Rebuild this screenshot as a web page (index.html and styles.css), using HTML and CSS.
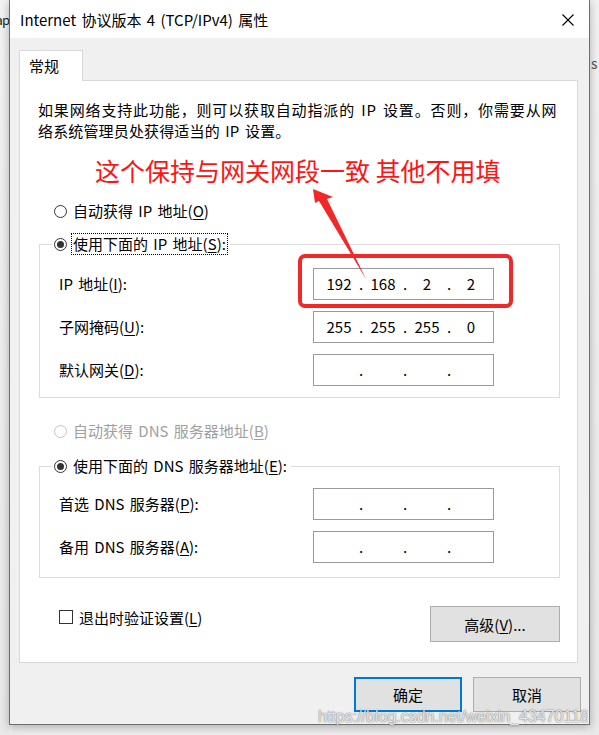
FILE: index.html
```html
<!DOCTYPE html>
<html lang="zh-CN">
<head>
<meta charset="utf-8">
<title>Internet 协议版本 4 (TCP/IPv4) 属性</title>
<link rel="stylesheet" href="styles.css">
</head>
<body>
<div class="desk">
  <div class="side side-left"><span class="side-text">ap</span></div>
  <div class="window">
    <div class="titlebar">
      <span class="title">Internet 协议版本 4 (TCP/IPv4) 属性</span>
      <svg class="close" width="12" height="12" viewBox="0 0 12 12"><path d="M0.5 0.5L11.5 11.5M11.5 0.5L0.5 11.5" stroke="#000" stroke-width="1.1" fill="none"/></svg>
    </div>
    <div class="body">
      <div class="tabs"><div class="tab">常规</div></div>
      <div class="panel">
        <p class="desc"><span class="line1">如果网络支持此功能，则可以获取自动指派的 IP 设置。否则，你需要从网</span><span class="line2">络系统管理员处获得适当的 IP 设置。</span></p>
        <div class="note">这个保持与网关网段一致 其他不用填</div>

        <div class="radio-row first"><span class="radio"></span><span class="rtext">自动获得 IP 地址(<u>O</u>)</span></div>
        <fieldset class="group g1">
          <legend class="legend"><span class="radio checked"></span><span class="focus">使用下面的 IP 地址(<u>S</u>):</span></legend>
          <div class="field-row"><span class="label">IP 地址(<u>I</u>):</span>
            <div class="ip"><span class="seg">192</span><span class="dot">.</span><span class="seg">168</span><span class="dot">.</span><span class="seg">2</span><span class="dot">.</span><span class="seg">2</span></div>
          </div>
          <div class="field-row"><span class="label">子网掩码(<u>U</u>):</span>
            <div class="ip"><span class="seg">255</span><span class="dot">.</span><span class="seg">255</span><span class="dot">.</span><span class="seg">255</span><span class="dot">.</span><span class="seg">0</span></div>
          </div>
          <div class="field-row"><span class="label">默认网关(<u>D</u>):</span>
            <div class="ip"><span class="seg"></span><span class="dot">.</span><span class="seg"></span><span class="dot">.</span><span class="seg"></span><span class="dot">.</span><span class="seg"></span></div>
          </div>
        </fieldset>

        <div class="radio-row third disabled"><span class="radio"></span><span class="rtext">自动获得 DNS 服务器地址(<u>B</u>)</span></div>
        <fieldset class="group g2">
          <legend class="legend"><span class="radio checked"></span><span class="nofocus">使用下面的 DNS 服务器地址(<u>E</u>):</span></legend>
          <div class="field-row"><span class="label">首选 DNS 服务器(<u>P</u>):</span>
            <div class="ip"><span class="seg"></span><span class="dot">.</span><span class="seg"></span><span class="dot">.</span><span class="seg"></span><span class="dot">.</span><span class="seg"></span></div>
          </div>
          <div class="field-row"><span class="label">备用 DNS 服务器(<u>A</u>):</span>
            <div class="ip"><span class="seg"></span><span class="dot">.</span><span class="seg"></span><span class="dot">.</span><span class="seg"></span><span class="dot">.</span><span class="seg"></span></div>
          </div>
        </fieldset>

        <div class="option-row">
          <div class="check-row"><span class="checkbox"></span><span>退出时验证设置(<u>L</u>)</span></div>
          <div class="btn adv">高级(<u>V</u>)...</div>
        </div>
      </div>
      <div class="actions">
        <div class="btn primary">确定</div>
        <div class="btn">取消</div>
      </div>
    </div>
  </div>
  <div class="side side-right"><span class="side-s">s</span></div>
</div>

<svg class="overlay" width="599" height="735" viewBox="0 0 599 735">
  <rect x="300" y="256" width="211" height="50" rx="5" ry="5" fill="none" stroke="#f02828" stroke-width="4"/>
  <polygon points="313,189 333,197 327,199 366,279 319,201 315,203" fill="#f02828"/>
</svg>
<div class="watermark">https://blog.csdn.net/weixin_43470118</div>
</body>
</html>
```

FILE: styles.css
```css
html, body {
  margin: 0;
  padding: 0;
}
body {
  width: 599px;
  height: 735px;
  overflow: hidden;
  background: #ededed;
  font-family: "Noto Sans CJK SC", "Noto Sans", sans-serif;
  font-size: 15px;
  word-spacing: 2px;
  color: #000;
}
u {
  text-decoration: underline;
  text-underline-offset: 2px;
}
.desk {
  display: flex;
  height: 735px;
  align-items: flex-start;
}
.side {
  height: 735px;
  overflow: hidden;
  background: linear-gradient(#f2f2f2, #e9e9e9);
}
.side-left {
  width: 9px;
  display: flex;
  justify-content: flex-end;
}
.side-text {
  display: block;
  margin-top: 9px;
  font-size: 13px;
  letter-spacing: -1px;
  line-height: 22px;
  white-space: nowrap;
  color: #1a1a1a;
}
.side-right {
  flex: 1;
}
.side-s {
  display: block;
  margin: 53px 0 0 1px;
  font-size: 14px;
  line-height: 20px;
  color: #555;
}
.window {
  width: 581px;
  box-sizing: border-box;
  border: 1px solid #6e6e6e;
  border-top: none;
  display: flex;
  flex-direction: column;
  box-shadow: 0 2px 9px rgba(0, 0, 0, 0.28);
  position: relative;
  z-index: 1;
}
.titlebar {
  height: 38px;
  background: #fff;
  display: flex;
  align-items: center;
  justify-content: space-between;
  padding: 0 15px 0 10px;
}
.title {
  font-size: 15px;
  line-height: 20px;
  margin-top: 2px;
}
.close {
  display: block;
  margin-top: 2px;
}
.body {
  background: #f0f0f0;
  padding: 12px 8px 12px 9px;
  display: flex;
  flex-direction: column;
}
.tabs {
  display: flex;
}
.tab {
  width: 64px;
  height: 31px;
  box-sizing: border-box;
  border: 1px solid #d9d9d9;
  border-bottom: none;
  background: #fff;
  margin-bottom: -1px;
  position: relative;
  z-index: 1;
  padding-left: 9px;
  line-height: 30px;
  font-size: 15px;
}
.panel {
  background: #fff;
  border: 1px solid #d9d9d9;
  margin-right: 3px;
  padding: 18px 18px 20px 18px;
}
.desc {
  margin: 0;
  font-size: 15px;
  line-height: 21px;
  white-space: nowrap;
}
.line1,
.line2 {
  display: block;
}
.line1 {
  letter-spacing: 0.85px;
}
.line2 {
  letter-spacing: 0.15px;
}
.note {
  margin: 13px 0 0 57px;
  font-size: 25px;
  line-height: 32px;
  word-spacing: 0;
  color: #ff1414;
  white-space: nowrap;
}
.radio-row {
  display: flex;
  align-items: center;
  height: 22px;
  margin-left: 16px;
}
.radio-row.first {
  margin-top: 14px;
}
.radio-row.third {
  margin-top: 22px;
}
.radio {
  width: 13px;
  height: 13px;
  box-sizing: border-box;
  border: 1px solid #333;
  border-radius: 50%;
  background: #fff;
  display: flex;
  align-items: center;
  justify-content: center;
  flex: none;
}
.radio.checked::after {
  content: "";
  width: 7px;
  height: 7px;
  border-radius: 50%;
  background: #333;
}
.radio-row .radio {
  margin-right: 6px;
}
.rtext {
  line-height: 20px;
}
.disabled {
  color: #a0a0a0;
}
.disabled .radio {
  border-color: #c4c4c4;
}
.group {
  margin: 0 0 0 1px;
  width: 521px;
  box-sizing: border-box;
  border: 1px solid #dcdcdc;
  min-width: 0;
}
.g1 {
  margin-top: 11px;
  padding: 13px 0 11px 19px;
}
.g2 {
  margin-top: 13px;
  padding: 11px 0 14px 19px;
}
.legend {
  padding: 0 2px;
  margin-left: -7px;
  display: flex;
  align-items: center;
  height: 22px;
}
.legend .radio {
  margin-right: 4px;
}
.focus {
  border: 1px dotted #000;
  padding: 0 1px;
  line-height: 20px;
}
.nofocus {
  padding: 0 2px;
  line-height: 20px;
}
.field-row {
  display: flex;
  align-items: center;
  height: 32px;
}
.field-row + .field-row {
  margin-top: 11px;
}
.label {
  width: 254px;
  flex: none;
  line-height: 20px;
}
.ip {
  width: 181px;
  height: 32px;
  box-sizing: border-box;
  border: 1px solid #9a9a9a;
  background: #fff;
  display: flex;
  align-items: center;
  padding-left: 7px;
  font-size: 15px;
  word-spacing: 0;
}
.seg {
  width: 36px;
  text-align: center;
  line-height: 20px;
}
.dot {
  width: 8px;
  text-align: center;
  line-height: 20px;
}
.option-row {
  margin-top: 28px;
  display: flex;
  justify-content: space-between;
  align-items: flex-start;
}
.check-row {
  display: flex;
  align-items: center;
  height: 22px;
  margin-left: 21px;
}
.checkbox {
  width: 14px;
  height: 14px;
  box-sizing: border-box;
  border: 1px solid #333;
  background: #fff;
  margin-right: 6px;
}
.btn {
  width: 108px;
  height: 35px;
  box-sizing: border-box;
  border: 1px solid #adadad;
  background: #e1e1e1;
  display: flex;
  align-items: center;
  justify-content: center;
  font-size: 15px;
}
.btn.adv {
  width: 130px;
  height: 36px;
  margin-right: -1px;
}
.btn.primary {
  border: 2px solid #0078d7;
}
.actions {
  margin-top: 14px;
  display: flex;
  justify-content: flex-end;
  gap: 11px;
}
.overlay {
  position: absolute;
  left: 0;
  top: 0;
  z-index: 5;
  pointer-events: none;
}
.watermark {
  position: absolute;
  left: 318px;
  top: 706px;
  width: 270px;
  overflow: hidden;
  white-space: nowrap;
  z-index: 6;
  font-family: "Liberation Sans", Arial, sans-serif;
  font-size: 16px;
  line-height: 22px;
  word-spacing: 0;
  color: rgba(255, 255, 255, 0.85);
  text-shadow: 0 0 1px rgba(0, 0, 0, 0.55), 0 0 2px rgba(0, 0, 0, 0.3);
}
```
